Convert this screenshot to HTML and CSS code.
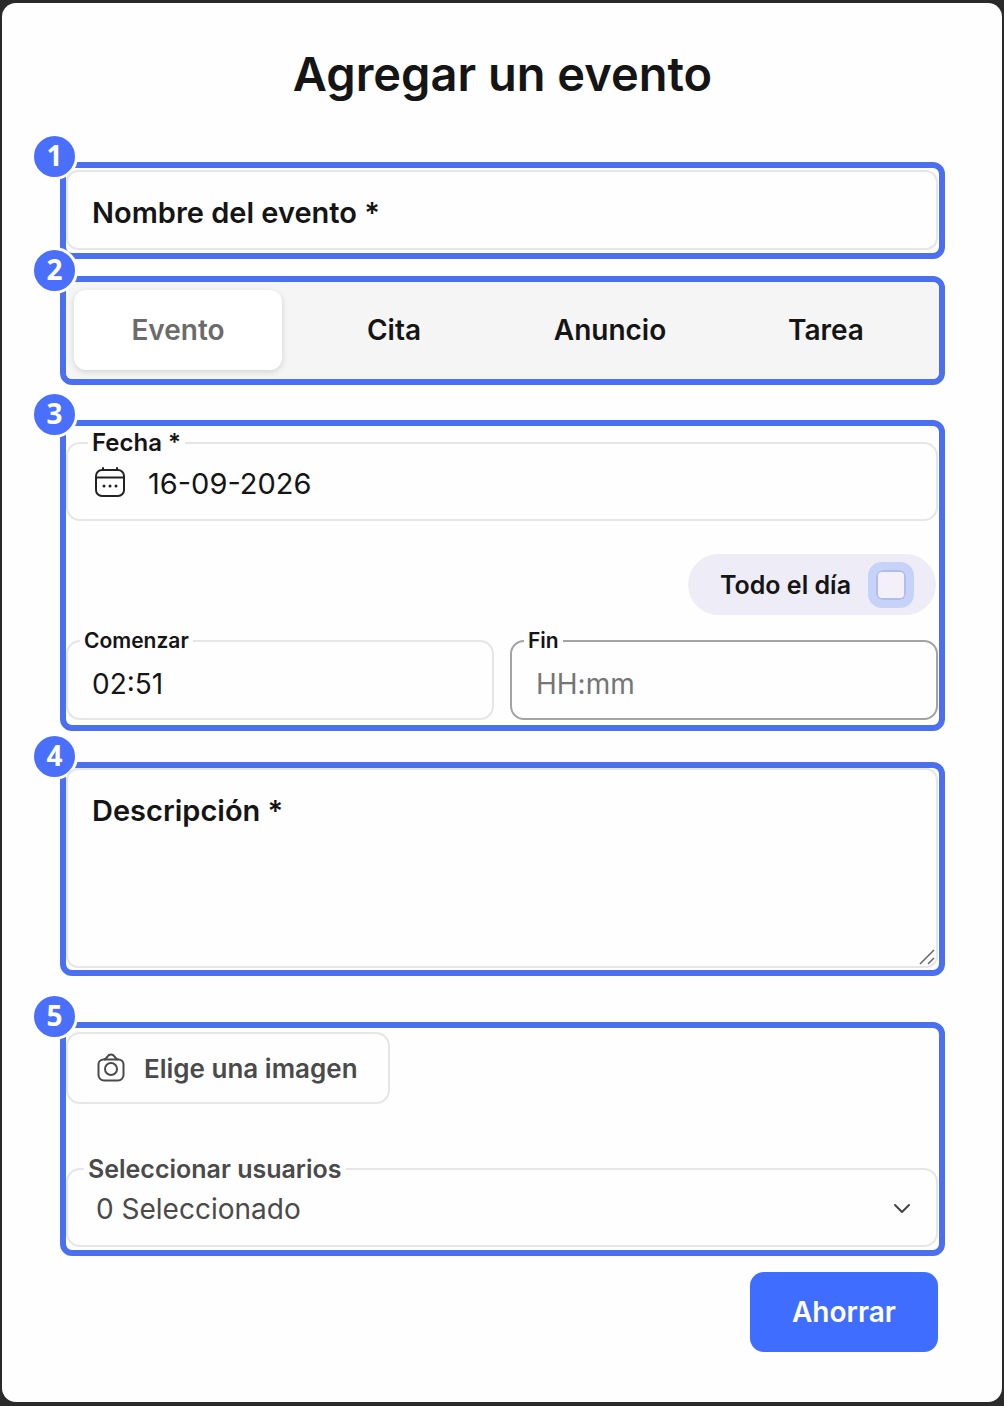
FILE: index.html
```html
<!DOCTYPE html>
<html lang="es">
<head>
<meta charset="utf-8">
<meta name="viewport" content="width=device-width, initial-scale=1">
<title>Agregar un evento</title>
<link rel="stylesheet" href="styles.css">
</head>
<body>

<form class="modal">
  <h1>Agregar un evento</h1>

  <section class="step step-name">
    <span class="badge">1</span>
    <div class="box">
      <label class="inner-label" for="nombre">Nombre del evento *</label>
      <input type="text" id="nombre" class="name-input">
    </div>
  </section>

  <section class="step step-type">
    <span class="badge">2</span>
    <div class="tabs">
      <button type="button" class="tab active">Evento</button>
      <button type="button" class="tab">Cita</button>
      <button type="button" class="tab">Anuncio</button>
      <button type="button" class="tab">Tarea</button>
    </div>
  </section>

  <section class="step step-date">
    <span class="badge">3</span>
    <fieldset class="field field-date">
      <legend><label for="fecha">Fecha *</label></legend>
      <div class="field-row">
        <svg class="icon" width="32" height="32" viewBox="0 0 32 32" fill="none" stroke="#222" stroke-width="2" stroke-linecap="round">
          <rect x="2" y="3" width="28" height="26" rx="6"/>
          <path d="M2 10.500h28M9 1v2M23 1v2"/>
          <path d="M10 19h.01M16 19h.01M22 19h.01" stroke-width="3"/>
        </svg>
        <input type="text" id="fecha" value="16-09-2026">
      </div>
    </fieldset>

    <label class="all-day">
      Todo el día
      <input type="checkbox">
    </label>

    <div class="times">
      <fieldset class="field field-time">
        <legend><label for="comenzar">Comenzar</label></legend>
        <div class="field-row">
          <input type="text" id="comenzar" value="02:51">
        </div>
      </fieldset>
      <fieldset class="field field-time outlined">
        <legend><label for="fin">Fin</label></legend>
        <div class="field-row">
          <input type="text" id="fin" placeholder="HH:mm">
        </div>
      </fieldset>
    </div>
  </section>

  <section class="step step-desc">
    <span class="badge">4</span>
    <div class="box">
      <label class="inner-label" for="descripcion">Descripción *</label>
      <textarea id="descripcion"></textarea>
      <svg class="grip" width="18" height="18" viewBox="0 0 18 18" fill="none" stroke="#666" stroke-width="1.500">
        <path d="M2 16L16 2M10 16l6-6"/>
      </svg>
    </div>
  </section>

  <section class="step step-extra">
    <span class="badge">5</span>
    <button type="button" class="pick-image">
      <svg width="30" height="30" viewBox="0 0 30 30" fill="none" stroke="#4a4a4a" stroke-width="2" stroke-linejoin="round">
        <path d="M7.500 6.500h15a5 5 0 0 1 5 4.500v11a5.500 5.500 0 0 1-5.500 5.500H8A5.500 5.500 0 0 1 2.500 22V11a5 5 0 0 1 5-4.500z"/>
        <path d="M8 6.500c2-.5 2.500-1.500 3.500-3C12.500 2 13.500 1.500 15 1.500s2.500.5 3.500 2c1 1.500 1.500 2.500 3.500 3"/>
        <circle cx="15" cy="16" r="6"/>
      </svg>
      Elige una imagen
    </button>
    <fieldset class="field field-users">
      <legend><label for="usuarios">Seleccionar usuarios</label></legend>
      <div class="field-row">
        <select id="usuarios">
          <option>0 Seleccionado</option>
        </select>
        <svg class="chevron" width="18" height="12" viewBox="0 0 18 12" fill="none" stroke="#444" stroke-width="2" stroke-linecap="round" stroke-linejoin="round">
          <path d="M2 2l7 7 7-7"/>
        </svg>
      </div>
    </fieldset>
  </section>

  <div class="actions">
    <button type="submit" class="save">Ahorrar</button>
  </div>
</form>

</body>
</html>
```
FILE: styles.css
```css
* {
  box-sizing: border-box;
}

body {
  margin: 0;
  padding: 3px 2px 4px;
  background-color: #2a2a2a;
  font-family: Inter, "Liberation Sans", sans-serif;
  font-size: 28px;
  color: #151515;
}

input, select, textarea, button {
  font: inherit;
  color: inherit;
}

.modal {
  background-color: #fefefe;
  border-radius: 14px;
  padding: 43px 57px 50px 58px;
}

h1 {
  margin: 0 0 60px;
  text-align: center;
  font-size: 47px;
  line-height: 56px;
  font-weight: 600;
}

/* numbered frames */
.step {
  position: relative;
  border: 6px solid #4a70f0;
  border-radius: 12px;
}

.badge {
  position: absolute;
  top: -35px;
  left: -35px;
  width: 47px;
  height: 47px;
  border: 3px solid #fefefe;
  border-radius: 50%;
  background-color: #4a70fb;
  color: #fff;
  font: bold 28px/39px "Open Sans", sans-serif;
  text-align: center;
}

.step-name {
  padding: 2px 1px 3px 0;
}

.step-type {
  margin-top: 17px;
}

.step-date {
  margin-top: 35px;
  padding: 5px 1px 5px 0;
}

.step-desc {
  margin-top: 31px;
  padding: 0 1px 2px 0;
}

.step-extra {
  margin-top: 46px;
  padding: 4px 1px 3px 0;
}

.box {
  position: relative;
  display: flex;
  border: 2px solid #e6e6e8;
  border-radius: 12px;
}

.inner-label {
  position: absolute;
  top: 25px;
  left: 24px;
  font-size: 29px;
  line-height: 32px;
  font-weight: 600;
}

.name-input, textarea {
  width: 100%;
  border: 0;
  border-radius: 12px;
  background: none;
  padding: 24px;
  outline: none;
}

.name-input {
  height: 76px;
}

textarea {
  height: 196px;
  resize: none;
}

.grip {
  position: absolute;
  right: 0;
  bottom: 0;
}

/* tabs */
.tabs {
  display: grid;
  grid-template-columns: repeat(4, 1fr);
  gap: 8px;
  padding: 8px 9px 9px 8px;
  background-color: #f5f5f5;
  border-radius: 6px;
}

.tab {
  height: 80px;
  border: 0;
  border-radius: 12px;
  background: none;
  font-weight: 600;
  cursor: pointer;
}

.tab.active {
  background-color: #fff;
  color: #6b6b6b;
  box-shadow: 0 2px 6px rgba(0, 0, 0, 0.14);
}

/* fields with the label on the border */
.field {
  min-width: 0;
  margin: 0;
  padding: 0 0 8px;
  border: 2px solid #e6e6e8;
  border-radius: 14px;
}

.field legend {
  padding: 0 4px;
  font-size: 25px;
  line-height: 24px;
  font-weight: 600;
}

.field-date legend {
  margin-left: 20px;
  font-size: 24px;
}

.field-time {
  padding-bottom: 6px;
}

.field-time legend {
  margin-left: 12px;
  font-size: 21px;
}

.field-users legend {
  margin-left: 16px;
}

.field-row {
  position: relative;
  display: flex;
  align-items: center;
  gap: 22px;
  padding: 0 24px;
}

.field-date .field-row {
  padding-left: 26px;
  font-size: 29px;
}

.field-time .field-row {
  padding-top: 3px;
}

.field-row input, .field-row select {
  flex: 1;
  min-width: 0;
  height: 56px;
  padding: 0;
  border: 0;
  background: none;
  outline: none;
}

.field-row ::placeholder {
  color: #757575;
  opacity: 1;
}

.outlined {
  border-color: #a3a3a3;
}

.all-day {
  display: flex;
  align-items: center;
  gap: 17px;
  width: fit-content;
  height: 61px;
  margin: 33px 2px 14px auto;
  padding: 0 22px 0 32px;
  border-radius: 31px;
  background-color: #eeecf7;
  font-size: 25px;
  font-weight: 600;
}

.all-day input {
  appearance: none;
  width: 46px;
  height: 46px;
  margin: 0;
  border: 8px solid #c6d2f8;
  border-radius: 14px;
  background-color: #f3f0f9;
  box-shadow: inset 0 0 0 2px #b4bdea;
}

.times {
  display: grid;
  grid-template-columns: 1fr 1fr;
  gap: 16px;
}

.pick-image {
  display: flex;
  align-items: center;
  gap: 18px;
  height: 72px;
  margin-bottom: 53px;
  padding: 0 30px 0 28px;
  border: 2px solid #e6e6e8;
  border-radius: 14px;
  background: none;
  color: #4a4a4a;
  font-size: 26px;
  font-weight: 600;
  cursor: pointer;
}

.field-users {
  color: #4a4a4a;
}

.field-users .field-row {
  padding: 0 26px 0 28px;
}

.field-row select {
  appearance: none;
}

.chevron {
  position: absolute;
  right: 25px;
  pointer-events: none;
}

.actions {
  display: flex;
  justify-content: flex-end;
  margin-top: 16px;
  padding-right: 7px;
}

.save {
  height: 80px;
  padding: 0 42px;
  border: 0;
  border-radius: 14px;
  background-color: #3f6dff;
  color: #fff;
  font-weight: 600;
  cursor: pointer;
}
```
